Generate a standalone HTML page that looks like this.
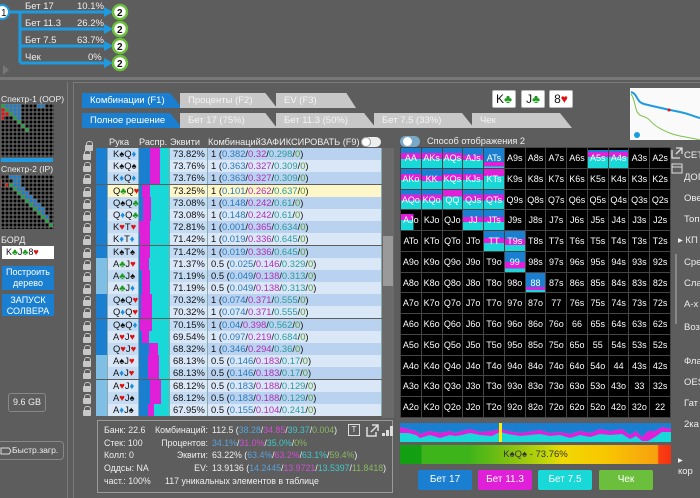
<!DOCTYPE html>
<html><head><meta charset="utf-8">
<style>
*{margin:0;padding:0;box-sizing:border-box}
body{width:700px;height:498px;background:#5d5d5d;font-family:"Liberation Sans","DejaVu Sans",sans-serif;position:relative;overflow:hidden;color:#eee;font-size:10px}
.a{position:absolute;white-space:nowrap}
.tab{position:absolute;height:15px;font-size:9.5px;line-height:15px;padding-left:8px;color:#fff}
.tb{background:#1a7fd0;clip-path:polygon(0 0,88% 0,100% 100%,0 100%)}
.tg{background:#c8c8c8;color:#f4f4f4;clip-path:polygon(0 0,88% 0,100% 100%,0 100%)}
#tbl{position:absolute;left:82px;top:148px;width:300px}
.r{height:12.2px;position:relative;font-size:9.4px;line-height:12px;color:#111}
.r>*{position:absolute;top:0;height:12px}
.lk{left:0;width:11px;top:2px!important;height:9px!important}
.lk::before{content:"";position:absolute;left:2px;top:0;width:5px;height:5px;border:1.5px solid #c8c8c8;border-bottom:none;border-radius:3px 3px 0 0}
.lk::after{content:"";position:absolute;left:1px;top:4px;width:8px;height:6px;background:#c8c8c8;border-radius:1px}
.w{left:14px;width:12px;background:#1a7fd0}
.w.h{background:#7fbfe6}
.hd{left:26px;width:31px;background:#c4dbf4;padding-left:5px}
.ds{left:57px;width:31px;display:flex;background:#c4dbf4}
.ds i{display:block;height:12px}
.eq{left:88px;width:38px;background:#c4dbf4;padding-left:3px}
.cb{left:126px;width:174px;background:#b8d2f0;padding-left:3px}
.r:nth-child(even) .cb,.r:nth-child(even) .eq,.r:nth-child(even) .hd{background:#dae7f7}
.r.y .cb,.r.y .eq,.r.y .hd{background:#fdf6c8}
.bl{background:#1a7fd0}.mg{background:#e020d8}.cy{background:#18d8d8}
.b{color:#2b7ab8}.m{color:#b22fb2}.t{color:#2a9c9c}.g{color:#5a9a2a}
.s{color:#111}.c{color:#1a9a1a}.d{color:#1a8fe0}.hh{color:#e01010}
.r>div{border-right:1px solid #8aa}
#grid{position:absolute;left:400px;top:147px;width:271px;height:271px;display:grid;grid-template-columns:repeat(13,1fr);grid-template-rows:repeat(13,1fr);background:#444;gap:1px;border:1px solid #444}
#grid span{background:#000;color:#fff;font-size:9px;text-align:center;line-height:20px;position:relative;overflow:hidden}
.p1{background:linear-gradient(#1a7fd0 0 25%,#e020d8 25% 55%,#18d8d8 55%)!important}
.p2{background:linear-gradient(#1a7fd0 0 70%,#e020d8 70% 92%,#18d8d8 92%)!important}
.p3{background:linear-gradient(#000 0 10%,#1a7fd0 10% 20%,#e020d8 20% 45%,#18d8d8 45%)!important}
.p4{background:linear-gradient(#e020d8 0 35%,#18d8d8 35%)!important}
.p5{background:linear-gradient(#1a7fd0 0 35%,#e020d8 35% 60%,#18d8d8 60%)!important}
.p6{background:linear-gradient(#1a7fd0 0 40%,#e020d8 40% 70%,#18d8d8 70%)!important}
.p7{background:linear-gradient(#1a7fd0 0 50%,#e020d8 50% 82%,#18d8d8 82%)!important}
.p8{background:linear-gradient(#1a7fd0 0 75%,#e020d8 75% 90%,#18d8d8 90%)!important}
.p9{background:linear-gradient(90deg,transparent 62%,#000 62%),linear-gradient(#000 0 20%,#e020d8 20% 50%,#18d8d8 50%)!important}
.btn{position:absolute;top:470px;width:54px;height:20px;border-radius:2px;color:#fff;font-size:10px;text-align:center;line-height:20px}
.rl{position:absolute;left:684px;font-size:9.5px;color:#eee}
.card{position:absolute;top:90px;width:24px;height:18px;background:#fff;border:1px solid #bbb;color:#111;font-size:12px;line-height:17px;text-align:center;border-radius:2px}
.lb{position:absolute;font-size:9px;color:#eee}
</style></head><body>

<svg class="a" style="left:0;top:0" width="140" height="75">
<g stroke="#1e9be0" stroke-width="3" fill="none">
<line x1="8" y1="12" x2="20" y2="12"/><line x1="20" y1="12" x2="20" y2="63"/>
<line x1="20" y1="12" x2="108" y2="12"/><line x1="20" y1="29" x2="108" y2="29"/>
<line x1="20" y1="46" x2="108" y2="46"/><line x1="20" y1="63" x2="108" y2="63"/>
</g>
<g fill="#1e9be0"><path d="M104 7 L113 12 L104 17Z"/><path d="M104 24 L113 29 L104 34Z"/><path d="M104 41 L113 46 L104 51Z"/><path d="M104 58 L113 63 L104 68Z"/></g>
<circle cx="2" cy="12" r="7" fill="#fff" stroke="#1e9be0" stroke-width="2"/>
<text x="1" y="16" font-size="10" fill="#111" font-family="Liberation Sans">1</text>
<g fill="#fff" stroke="#6cbf3c" stroke-width="2.5">
<circle cx="120" cy="12" r="7"/><circle cx="120" cy="29" r="7"/><circle cx="120" cy="46" r="7"/><circle cx="120" cy="63" r="7"/></g>
<g font-size="10" fill="#111" font-family="Liberation Sans" font-weight="bold"><text x="117" y="16">2</text><text x="117" y="33">2</text><text x="117" y="50">2</text><text x="117" y="67">2</text></g>
<g font-size="9.5" fill="#eee" font-family="Liberation Sans"><text x="25" y="9">Бет 17</text><text x="77" y="9">10.1%</text><text x="25" y="26">Бет 11.3</text><text x="77" y="26">26.2%</text><text x="25" y="43">Бет 7.5</text><text x="77" y="43">63.7%</text><text x="25" y="60">Чек</text><text x="88" y="60">0%</text></g>
<path d="M3 65 L9 70 L3 75Z" fill="#777"/>
</svg>
<div class="a" style="left:0;top:77px;width:700px;height:3px;background:#777"></div>

<div class="a" style="left:0;top:82px;width:68px;height:416px;border-right:1px solid #7a7a7a"></div>
<div class="lb" style="left:1px;top:94px;font-size:8.6px">Спектр-1 (OOP)</div>
<svg class="a" style="left:1px;top:104px" width="53" height="53">
<rect width="53" height="53" fill="#000"/>
<g fill="#1a7fd0"><rect x="4" y="0" width="16" height="4"/><rect x="36" y="0" width="8" height="4"/><rect x="8" y="4" width="12" height="4"/><rect x="12" y="8" width="8" height="4"/><rect x="16" y="12" width="4" height="4"/></g>
<g fill="#1aa83a"><rect x="0" y="0" width="4" height="4"/><rect x="4" y="4" width="4" height="4"/><rect x="8" y="8" width="4" height="4"/><rect x="12" y="12" width="4" height="4"/><rect x="16" y="16" width="4" height="4"/><rect x="20" y="20" width="4" height="4"/><rect x="24" y="24" width="4" height="4"/></g>
<g fill="#e01010"><rect x="0" y="4" width="4" height="4"/><rect x="0" y="8" width="8" height="4"/><rect x="0" y="12" width="3" height="4"/></g>
<path d="M0 0H53M0 4H53M0 8H53M0 12H53M0 16H53M0 20H53M0 24H53M0 28H53M0 32H53M0 36H53M0 40H53M0 44H53M0 48H53M0 52H53M0 0V53M4 0V53M8 0V53M12 0V53M16 0V53M20 0V53M24 0V53M28 0V53M32 0V53M36 0V53M40 0V53M44 0V53M48 0V53M52 0V53" stroke="#777" stroke-width="1"/>
</svg>
<div class="a" style="left:1px;top:158px;width:52px;height:4px;background:#1e9be0"></div>
<div class="lb" style="left:1px;top:164px;font-size:8.6px">Спектр-2 (IP)</div>
<svg class="a" style="left:1px;top:175px" width="53" height="54">
<rect width="53" height="54" fill="#000"/>
<g fill="#1a7fd0"><rect x="8" y="0" width="12" height="4"/><rect x="12" y="4" width="8" height="4"/><rect x="12" y="8" width="8" height="4"/><rect x="16" y="12" width="8" height="4"/><rect x="20" y="16" width="8" height="4"/><rect x="24" y="20" width="8" height="4"/><rect x="28" y="24" width="8" height="4"/><rect x="32" y="28" width="8" height="4"/><rect x="36" y="32" width="8" height="4"/><rect x="40" y="36" width="4" height="4"/><rect x="44" y="40" width="4" height="4"/></g>
<g fill="#1aa83a"><rect x="8" y="8" width="4" height="4"/><rect x="12" y="12" width="4" height="4"/><rect x="16" y="16" width="4" height="4"/><rect x="20" y="20" width="4" height="4"/><rect x="24" y="24" width="4" height="4"/><rect x="28" y="28" width="4" height="4"/><rect x="32" y="32" width="4" height="4"/><rect x="36" y="36" width="4" height="4"/><rect x="40" y="40" width="4" height="4"/><rect x="44" y="44" width="4" height="4"/><rect x="48" y="48" width="4" height="4"/></g>
<g fill="#e01010"><rect x="4" y="8" width="3" height="4"/><rect x="0" y="4" width="1" height="8"/></g>
<path d="M0 0H53M0 4H53M0 8H53M0 12H53M0 16H53M0 20H53M0 24H53M0 28H53M0 32H53M0 36H53M0 40H53M0 44H53M0 48H53M0 52H53M0 0V54M4 0V54M8 0V54M12 0V54M16 0V54M20 0V54M24 0V54M28 0V54M32 0V54M36 0V54M40 0V54M44 0V54M48 0V54M52 0V54" stroke="#777" stroke-width="1"/>
</svg>
<div class="lb" style="left:1px;top:235px">БОРД</div>
<div class="a" style="left:2px;top:246px;width:52px;height:13px;background:#fff;color:#111;font-size:9px;line-height:13px;padding-left:4px">K<span class="c">♣</span>J<span class="c">♣</span>8<span class="hh">♥</span></div>
<div class="a" style="left:2px;top:266px;width:52px;height:24px;background:#1a7fd0;color:#fff;font-size:9px;text-align:center;line-height:11px;padding-top:1px">Построить<br>дерево</div>
<div class="a" style="left:2px;top:294px;width:52px;height:22px;background:#1a7fd0;color:#fff;font-size:9px;text-align:center;line-height:10.5px;padding-top:1px">ЗАПУСК<br>СОЛВЕРА</div>
<div class="a" style="left:8px;top:393px;width:38px;height:19px;border:1px solid #888;border-radius:3px;font-size:9px;text-align:center;line-height:17px">9.6 GB</div>
<div class="a" style="left:-3px;top:441px;width:67px;height:19px;border:1px solid #888;border-radius:4px;font-size:8.6px;line-height:17px;padding-left:14px">Быстр.загр.</div>
<svg class="a" style="left:0;top:446px" width="12" height="10"><path d="M1 2H9L11 5L9 8H1Z" fill="none" stroke="#ddd" stroke-width="1"/></svg>

<div class="a" style="left:73px;top:82px;width:627px;height:416px;border-left:1px solid #7a7a7a;border-top:1px solid #7a7a7a"></div>
<div class="tab tb" style="left:82px;top:93px;width:100px">Комбинации (F1)</div>
<div class="tab tg" style="left:180px;top:93px;width:97px">Проценты (F2)</div>
<div class="tab tg" style="left:276px;top:93px;width:80px">EV (F3)</div>
<div class="tab tb" style="left:82px;top:113px;width:100px">Полное решение</div>
<div class="tab tg" style="left:180px;top:113px;width:97px">Бет 17 (75%)</div>
<div class="tab tg" style="left:276px;top:113px;width:100px">Бет 11.3 (50%)</div>
<div class="tab tg" style="left:374px;top:113px;width:100px">Бет 7.5 (33%)</div>
<div class="tab tg" style="left:472px;top:113px;width:100px">Чек</div>
<div class="card" style="left:492px">K<span class="c">♣</span></div>
<div class="card" style="left:521px">J<span class="c">♣</span></div>
<div class="card" style="left:549px">8<span class="hh">♥</span></div>
<svg class="a" style="left:630px;top:88px" width="70" height="52"><rect width="70" height="52" fill="#fafafa"/>
<path d="M1 4 C8 6 6 14 14 16 S40 22 50 24 S62 28 70 30" stroke="#1e9be0" stroke-width="2" fill="none"/>
<circle cx="39" cy="22" r="1.5" fill="#e01010"/>
<path d="M1 6 C6 12 4 26 12 28 S20 34 26 38 S40 46 50 48 S62 50 70 52" stroke="#7cc04a" stroke-width="1" fill="none"/>
<circle cx="7" cy="47" r="3" fill="#1e9be0"/></svg>

<div class="a" style="left:84px;top:139px;width:11px;height:9px"><div class="lk" style="position:absolute"></div></div>
<div class="a" style="left:109px;top:137px;font-size:9.2px">Рука</div>
<div class="a" style="left:139px;top:137px;font-size:9.2px">Распр.</div>
<div class="a" style="left:170px;top:137px;font-size:9.2px">Эквити</div>
<div class="a" style="left:208px;top:137px;font-size:9.2px">КомбинацийЗАФИКСИРОВАТЬ (F9)</div>
<div class="a" style="left:361px;top:137px;width:20px;height:10px;border-radius:5px;background:#eee"></div>
<div class="a" style="left:361px;top:137px;width:10px;height:10px;border-radius:5px;background:#fff;border:1px solid #999"></div>
<div class="a" style="left:400px;top:136px;width:20px;height:11px;border-radius:6px;background:#7aa8c8"></div>
<div class="a" style="left:403px;top:137px;width:9px;height:9px;border-radius:5px;background:#fff"></div>
<div class="a" style="left:427px;top:136px;font-size:9.2px">Способ отображения 2</div>
<div class="a" style="left:382px;top:148px;width:12px;height:270px;background:#6a6a6a"></div>
<div class="a" style="left:383px;top:236px;width:10px;height:50px;background:#9a9a9a"></div>

<div id="tbl">
<div class="r"><span class="lk"></span><div class="w"></div><div class="hd">K<span class="s">♠</span>Q<span class="d">♦</span></div><div class="ds"><i class="bl" style="width:11px"></i><i class="mg" style="width:10px"></i><i class="cy" style="width:9px"></i></div><div class="eq">73.82%</div><div class="cb">1 (<span class="b">0.382</span>/<span class="m">0.32</span>/<span class="t">0.298</span>/<span class="g">0</span>)</div></div>
<div class="r"><span class="lk"></span><div class="w"></div><div class="hd">K<span class="s">♠</span>Q<span class="s">♠</span></div><div class="ds"><i class="bl" style="width:11px"></i><i class="mg" style="width:10px"></i><i class="cy" style="width:9px"></i></div><div class="eq">73.76%</div><div class="cb">1 (<span class="b">0.363</span>/<span class="m">0.327</span>/<span class="t">0.309</span>/<span class="g">0</span>)</div></div>
<div class="r"><span class="lk"></span><div class="w"></div><div class="hd">K<span class="d">♦</span>Q<span class="d">♦</span></div><div class="ds"><i class="bl" style="width:11px"></i><i class="mg" style="width:10px"></i><i class="cy" style="width:9px"></i></div><div class="eq">73.76%</div><div class="cb">1 (<span class="b">0.363</span>/<span class="m">0.327</span>/<span class="t">0.309</span>/<span class="g">0</span>)</div></div>
<div class="r y"><span class="lk"></span><div class="w"></div><div class="hd">Q<span class="c">♣</span>Q<span class="hh">♥</span></div><div class="ds"><i class="bl" style="width:3px"></i><i class="mg" style="width:8px"></i><i class="cy" style="width:19px"></i></div><div class="eq">73.25%</div><div class="cb">1 (<span class="b">0.101</span>/<span class="m">0.262</span>/<span class="t">0.637</span>/<span class="g">0</span>)</div></div>
<div class="r"><span class="lk"></span><div class="w"></div><div class="hd">Q<span class="s">♠</span>Q<span class="c">♣</span></div><div class="ds"><i class="bl" style="width:4px"></i><i class="mg" style="width:8px"></i><i class="cy" style="width:18px"></i></div><div class="eq">73.08%</div><div class="cb">1 (<span class="b">0.148</span>/<span class="m">0.242</span>/<span class="t">0.61</span>/<span class="g">0</span>)</div></div>
<div class="r"><span class="lk"></span><div class="w"></div><div class="hd">Q<span class="d">♦</span>Q<span class="c">♣</span></div><div class="ds"><i class="bl" style="width:4px"></i><i class="mg" style="width:8px"></i><i class="cy" style="width:18px"></i></div><div class="eq">73.08%</div><div class="cb">1 (<span class="b">0.148</span>/<span class="m">0.242</span>/<span class="t">0.61</span>/<span class="g">0</span>)</div></div>
<div class="r"><span class="lk"></span><div class="w"></div><div class="hd">K<span class="hh">♥</span>T<span class="hh">♥</span></div><div class="ds"><i class="mg" style="width:11px"></i><i class="cy" style="width:19px"></i></div><div class="eq">72.81%</div><div class="cb">1 (<span class="b">0.001</span>/<span class="m">0.365</span>/<span class="t">0.634</span>/<span class="g">0</span>)</div></div>
<div class="r"><span class="lk"></span><div class="w"></div><div class="hd">K<span class="d">♦</span>T<span class="d">♦</span></div><div class="ds"><i class="bl" style="width:1px"></i><i class="mg" style="width:10px"></i><i class="cy" style="width:19px"></i></div><div class="eq">71.42%</div><div class="cb">1 (<span class="b">0.019</span>/<span class="m">0.336</span>/<span class="t">0.645</span>/<span class="g">0</span>)</div></div>
<div class="r"><span class="lk"></span><div class="w"></div><div class="hd">K<span class="s">♠</span>T<span class="s">♠</span></div><div class="ds"><i class="bl" style="width:1px"></i><i class="mg" style="width:10px"></i><i class="cy" style="width:19px"></i></div><div class="eq">71.42%</div><div class="cb">1 (<span class="b">0.019</span>/<span class="m">0.336</span>/<span class="t">0.645</span>/<span class="g">0</span>)</div></div>
<div class="r"><span class="lk"></span><div class="w h"></div><div class="hd">A<span class="c">♣</span>J<span class="hh">♥</span></div><div class="ds"><i class="bl" style="width:1px"></i><i class="mg" style="width:9px"></i><i class="cy" style="width:20px"></i></div><div class="eq">71.37%</div><div class="cb">0.5 (<span class="b">0.025</span>/<span class="m">0.146</span>/<span class="t">0.329</span>/<span class="g">0</span>)</div></div>
<div class="r"><span class="lk"></span><div class="w h"></div><div class="hd">A<span class="c">♣</span>J<span class="s">♠</span></div><div class="ds"><i class="bl" style="width:3px"></i><i class="mg" style="width:8px"></i><i class="cy" style="width:19px"></i></div><div class="eq">71.19%</div><div class="cb">0.5 (<span class="b">0.049</span>/<span class="m">0.138</span>/<span class="t">0.313</span>/<span class="g">0</span>)</div></div>
<div class="r"><span class="lk"></span><div class="w h"></div><div class="hd">A<span class="c">♣</span>J<span class="d">♦</span></div><div class="ds"><i class="bl" style="width:3px"></i><i class="mg" style="width:8px"></i><i class="cy" style="width:19px"></i></div><div class="eq">71.19%</div><div class="cb">0.5 (<span class="b">0.049</span>/<span class="m">0.138</span>/<span class="t">0.313</span>/<span class="g">0</span>)</div></div>
<div class="r"><span class="lk"></span><div class="w"></div><div class="hd">Q<span class="s">♠</span>Q<span class="hh">♥</span></div><div class="ds"><i class="bl" style="width:2px"></i><i class="mg" style="width:11px"></i><i class="cy" style="width:17px"></i></div><div class="eq">70.32%</div><div class="cb">1 (<span class="b">0.074</span>/<span class="m">0.371</span>/<span class="t">0.555</span>/<span class="g">0</span>)</div></div>
<div class="r"><span class="lk"></span><div class="w"></div><div class="hd">Q<span class="d">♦</span>Q<span class="hh">♥</span></div><div class="ds"><i class="bl" style="width:2px"></i><i class="mg" style="width:11px"></i><i class="cy" style="width:17px"></i></div><div class="eq">70.32%</div><div class="cb">1 (<span class="b">0.074</span>/<span class="m">0.371</span>/<span class="t">0.555</span>/<span class="g">0</span>)</div></div>
<div class="r"><span class="lk"></span><div class="w"></div><div class="hd">Q<span class="s">♠</span>Q<span class="d">♦</span></div><div class="ds"><i class="bl" style="width:1px"></i><i class="mg" style="width:12px"></i><i class="cy" style="width:17px"></i></div><div class="eq">70.15%</div><div class="cb">1 (<span class="b">0.04</span>/<span class="m">0.398</span>/<span class="t">0.562</span>/<span class="g">0</span>)</div></div>
<div class="r"><span class="lk"></span><div class="w"></div><div class="hd">A<span class="hh">♥</span>J<span class="hh">♥</span></div><div class="ds"><i class="bl" style="width:3px"></i><i class="mg" style="width:7px"></i><i class="cy" style="width:20px"></i></div><div class="eq">69.54%</div><div class="cb">1 (<span class="b">0.097</span>/<span class="m">0.219</span>/<span class="t">0.684</span>/<span class="g">0</span>)</div></div>
<div class="r"><span class="lk"></span><div class="w"></div><div class="hd">Q<span class="hh">♥</span>J<span class="hh">♥</span></div><div class="ds"><i class="bl" style="width:10px"></i><i class="mg" style="width:9px"></i><i class="cy" style="width:11px"></i></div><div class="eq">68.32%</div><div class="cb">1 (<span class="b">0.346</span>/<span class="m">0.294</span>/<span class="t">0.36</span>/<span class="g">0</span>)</div></div>
<div class="r"><span class="lk"></span><div class="w h"></div><div class="hd">A<span class="s">♠</span>J<span class="hh">♥</span></div><div class="ds"><i class="bl" style="width:9px"></i><i class="mg" style="width:11px"></i><i class="cy" style="width:10px"></i></div><div class="eq">68.13%</div><div class="cb">0.5 (<span class="b">0.146</span>/<span class="m">0.183</span>/<span class="t">0.17</span>/<span class="g">0</span>)</div></div>
<div class="r"><span class="lk"></span><div class="w h"></div><div class="hd">A<span class="d">♦</span>J<span class="hh">♥</span></div><div class="ds"><i class="bl" style="width:9px"></i><i class="mg" style="width:11px"></i><i class="cy" style="width:10px"></i></div><div class="eq">68.13%</div><div class="cb">0.5 (<span class="b">0.146</span>/<span class="m">0.183</span>/<span class="t">0.17</span>/<span class="g">0</span>)</div></div>
<div class="r"><span class="lk"></span><div class="w h"></div><div class="hd">A<span class="hh">♥</span>J<span class="d">♦</span></div><div class="ds"><i class="bl" style="width:11px"></i><i class="mg" style="width:11px"></i><i class="cy" style="width:8px"></i></div><div class="eq">68.12%</div><div class="cb">0.5 (<span class="b">0.183</span>/<span class="m">0.188</span>/<span class="t">0.129</span>/<span class="g">0</span>)</div></div>
<div class="r"><span class="lk"></span><div class="w h"></div><div class="hd">A<span class="hh">♥</span>J<span class="s">♠</span></div><div class="ds"><i class="bl" style="width:11px"></i><i class="mg" style="width:11px"></i><i class="cy" style="width:8px"></i></div><div class="eq">68.12%</div><div class="cb">0.5 (<span class="b">0.183</span>/<span class="m">0.188</span>/<span class="t">0.129</span>/<span class="g">0</span>)</div></div>
<div class="r"><span class="lk"></span><div class="w h"></div><div class="hd">A<span class="d">♦</span>J<span class="s">♠</span></div><div class="ds"><i class="bl" style="width:9px"></i><i class="mg" style="width:6px"></i><i class="cy" style="width:15px"></i></div><div class="eq">67.95%</div><div class="cb">0.5 (<span class="b">0.155</span>/<span class="m">0.104</span>/<span class="t">0.241</span>/<span class="g">0</span>)</div></div>
</div>

<div class="a" style="left:97px;top:420px;width:296px;height:73px;border:1px solid #999"></div>
<div class="a" style="left:104px;top:424px;font-size:8.8px;line-height:12.7px">Банк: 22.6<br>Стек: 100<br>Колл: 0<br>Оддсы: NA<br>част.: 100%</div>
<div class="a" style="left:140px;top:424px;width:68px;font-size:8.8px;line-height:12.7px;text-align:right">Комбинаций:<br>Процентов:<br>Эквити:<br>EV:</div>
<div class="a" style="left:212px;top:424px;font-size:8.8px;line-height:12.7px">112.5 (<span style="color:#5aa0d8">38.28</span>/<span style="color:#d050d0">34.85</span>/<span style="color:#40c8c8">39.37</span>/<span style="color:#8ab860">0.004</span>)<br><span style="color:#5aa0d8">34.1%</span>/<span style="color:#d050d0">31.0%</span>/<span style="color:#40c8c8">35.0%</span>/<span style="color:#8ab860">0%</span><br>63.22% (<span style="color:#5aa0d8">63.4%</span>/<span style="color:#d050d0">63.2%</span>/<span style="color:#40c8c8">63.1%</span>/<span style="color:#8ab860">59.4%</span>)<br>13.9136 (<span style="color:#5aa0d8">14.2445</span>/<span style="color:#d050d0">13.9721</span>/<span style="color:#40c8c8">13.5397</span>/<span style="color:#8ab860">11.8418</span>)</div>
<div class="a" style="left:165px;top:476px;font-size:8.8px">117 уникальных элементов в таблице</div>
<div class="a" style="left:348px;top:424px;width:12px;height:12px;border:1px solid #ddd;font-size:8px;text-align:center;line-height:10px">T</div>
<svg class="a" style="left:366px;top:424px" width="30" height="13"><path d="M1 3V12H10V8M6 1H12V7M12 1L5 8" stroke="#ddd" stroke-width="1.5" fill="none"/><rect x="16" y="9" width="3" height="3" fill="#ddd"/><rect x="20" y="6" width="3" height="6" fill="#ddd"/><rect x="24" y="2" width="3" height="10" fill="#ddd"/></svg>

<div id="grid">
<span class="p1">AA</span><span class="p1">AKs</span><span class="p1">AQs</span><span class="p5">AJs</span><span class="p2">ATs</span><span>A9s</span><span>A8s</span><span>A7s</span><span>A6s</span><span class="p3">A5s</span><span class="p3">A4s</span><span>A3s</span><span>A2s</span>
<span class="p1">AKo</span><span class="p5">KK</span><span class="p1">KQs</span><span class="p1">KJs</span><span class="p4">KTs</span><span>K9s</span><span>K8s</span><span>K7s</span><span>K6s</span><span>K5s</span><span>K4s</span><span>K3s</span><span>K2s</span>
<span class="p1">AQo</span><span class="p1">KQo</span><span class="p4">QQ</span><span class="p1">QJs</span><span class="p1">QTs</span><span>Q9s</span><span>Q8s</span><span>Q7s</span><span>Q6s</span><span>Q5s</span><span>Q4s</span><span>Q3s</span><span>Q2s</span>
<span class="p9">AJo</span><span>KJo</span><span>QJo</span><span class="p5">JJ</span><span class="p5">JTs</span><span>J9s</span><span>J8s</span><span>J7s</span><span>J6s</span><span>J5s</span><span>J4s</span><span>J3s</span><span>J2s</span>
<span>ATo</span><span>KTo</span><span>QTo</span><span>JTo</span><span class="p5">TT</span><span class="p6">T9s</span><span>T8s</span><span>T7s</span><span>T6s</span><span>T5s</span><span>T4s</span><span>T3s</span><span>T2s</span>
<span>A9o</span><span>K9o</span><span>Q9o</span><span>J9o</span><span>T9o</span><span class="p7">99</span><span>98s</span><span>97s</span><span>96s</span><span>95s</span><span>94s</span><span>93s</span><span>92s</span>
<span>A8o</span><span>K8o</span><span>Q8o</span><span>J8o</span><span>T8o</span><span>98o</span><span class="p8">88</span><span>87s</span><span>86s</span><span>85s</span><span>84s</span><span>83s</span><span>82s</span>
<span>A7o</span><span>K7o</span><span>Q7o</span><span>J7o</span><span>T7o</span><span>97o</span><span>87o</span><span>77</span><span>76s</span><span>75s</span><span>74s</span><span>73s</span><span>72s</span>
<span>A6o</span><span>K6o</span><span>Q6o</span><span>J6o</span><span>T6o</span><span>96o</span><span>86o</span><span>76o</span><span>66</span><span>65s</span><span>64s</span><span>63s</span><span>62s</span>
<span>A5o</span><span>K5o</span><span>Q5o</span><span>J5o</span><span>T5o</span><span>95o</span><span>85o</span><span>75o</span><span>65o</span><span>55</span><span>54s</span><span>53s</span><span>52s</span>
<span>A4o</span><span>K4o</span><span>Q4o</span><span>J4o</span><span>T4o</span><span>94o</span><span>84o</span><span>74o</span><span>64o</span><span>54o</span><span>44</span><span>43s</span><span>42s</span>
<span>A3o</span><span>K3o</span><span>Q3o</span><span>J3o</span><span>T3o</span><span>93o</span><span>83o</span><span>73o</span><span>63o</span><span>53o</span><span>43o</span><span>33</span><span>32s</span>
<span>A2o</span><span>K2o</span><span>Q2o</span><span>J2o</span><span>T2o</span><span>92o</span><span>82o</span><span>72o</span><span>62o</span><span>52o</span><span>42o</span><span>32o</span><span>22</span>
</div>

<svg class="a" style="left:400px;top:423px" width="271" height="19">
<rect width="271" height="19" fill="#18d8d8"/>
<path d="M0 0H271V6L262 4L255 8L248 8L242 14L236 8L230 12L222 6L210 8L200 6L190 10L180 8L170 11L160 9L150 10L140 7L120 10L108 8L100 6L92 8L80 9L70 6L62 8L55 10L50 8L40 10L30 8L20 11L16 8L8 6L0 4Z" fill="#1a7fd0"/>
<path d="M0 4L8 6L16 8L20 11L30 8L40 10L50 8L55 10L62 8L70 6L80 9L92 8L100 6L108 8L120 10L140 7L150 10L160 9L170 11L180 8L190 10L200 6L210 8L222 6L230 12L236 8L242 14L248 8L255 8L262 4L271 6V9L262 9L255 14L248 18L242 18L236 13L230 16L222 11L210 12L200 11L190 14L180 12L170 15L160 12L150 13L140 11L120 13L108 11L100 9L92 13L80 12L70 10L62 12L55 13L50 12L40 15L30 12L20 15L16 12L8 10L0 10Z" fill="#e020d8"/>
<rect x="99" y="0" width="3" height="19" fill="#ffee00"/>
</svg>
<div class="a" style="left:400px;top:445px;width:271px;height:19px;background:linear-gradient(90deg,#12a012 0 8%,#3cb41a 8% 25%,#80c010 40%,#c8d808 55%,#f0d800 60%,#f8c800 75%,#f8a010 95%,#f84010 95.5%,#f83010);color:#333;font-size:9.5px;text-align:center;line-height:19px">K<span>♠</span>Q<span>♠</span> - 73.76%</div>
<div class="btn" style="left:418px;background:#1a7fd0">Бет 17</div>
<div class="btn" style="left:478px;background:#e020d8">Бет 11.3</div>
<div class="btn" style="left:538px;background:#18d8d8">Бет 7.5</div>
<div class="btn" style="left:599px;background:#6cbf3c">Чек</div>

<svg class="a" style="left:671px;top:147px" width="12" height="30"><path d="M1 3V11H9M5 1H11V7M11 1L5 7" stroke="#ddd" stroke-width="1.3" fill="none"/><rect x="1" y="17" width="10" height="9" fill="none" stroke="#ddd"/><line x1="1" y1="20" x2="11" y2="20" stroke="#ddd"/></svg>
<div class="rl" style="top:150px">СЕТ</div>
<div class="rl" style="top:172px">ДОП</div>
<div class="rl" style="top:193px">Ове</div>
<div class="rl" style="top:214px">Топ</div>
<div class="rl" style="top:235px;left:678px">▸ КП</div>
<div class="rl" style="top:257px">Сре</div>
<div class="rl" style="top:278px">Сла</div>
<div class="rl" style="top:299px">А-х</div>
<div class="rl" style="top:322px">Воз</div>
<div class="rl" style="top:356px">Фла</div>
<div class="rl" style="top:377px">OES</div>
<div class="rl" style="top:398px">Гат</div>
<div class="rl" style="top:419px">2ка</div>
<div class="rl" style="top:455px;left:678px">▸ кор</div>
<div class="a" style="left:675px;top:254px;width:2px;height:70px;background:#888"></div>
</body></html>
